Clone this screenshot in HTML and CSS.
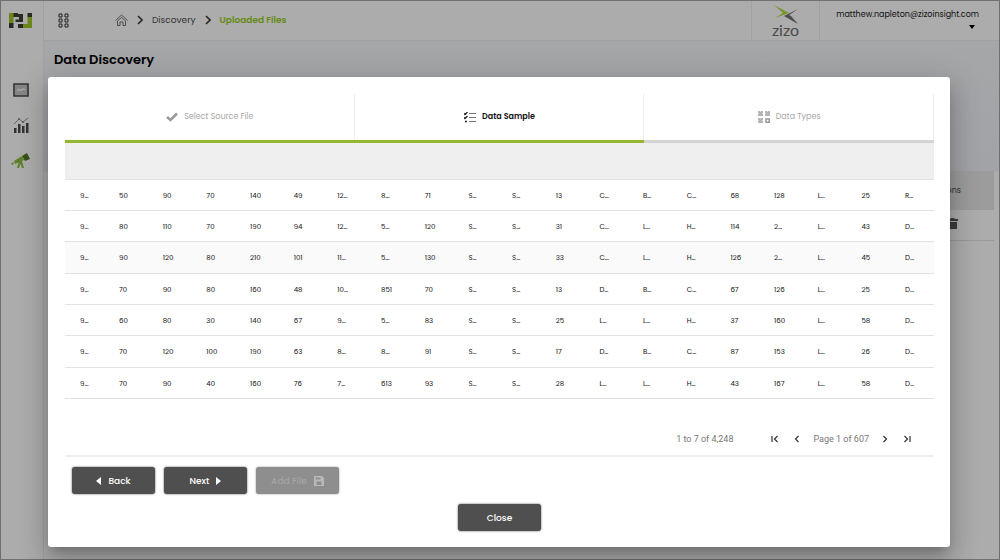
FILE: index.html
```html
<!DOCTYPE html>
<html lang="en">
<head>
<meta charset="utf-8">
<title>Data Discovery</title>
<link rel="stylesheet" href="styles.css">
</head>
<body>
<div class="app">
  <aside class="sidebar">
    <svg class="brand" width="23" height="15" viewBox="0 0 23 15" aria-hidden="true">
      <path fill="#688619" d="M0 0h9v4H4.500v6H0zM18.500 4H23v11h-9v-4h4.500z"/>
      <path fill="#292a22" d="M0 10h4.500v5H0zM4.500 0H9v4H4.500zM9 1h5v8H6.500V6.500H10V4H9zM18.500 0H23v4h-4.500zM9 11h5v4H9z"/>
    </svg>
    <nav class="side-nav" aria-label="Sections">
      <a href="#" aria-label="Dashboard"><svg width="16" height="14" viewBox="0 0 16 14"><path fill="#858585" stroke="#333" stroke-width="1.6" d="M1 1h14v12H1z"/><path fill="none" stroke="#b8b8b8" d="M4 7.500l2-1 2 1 2-1.500 2 .5"/></svg></a>
      <a href="#" aria-label="Analytics"><svg width="16" height="16" viewBox="0 0 16 16"><path fill="#333" d="M1 11h2.500v5H1zM5 7h2.500v9H5zM9 9h2.500v7H9zM13 6h2.500v10H13z"/><path fill="none" stroke="#666" d="M1 7l5-5 4 3 5-4"/><circle cx="6" cy="2" r="1" fill="#555"/><circle cx="10" cy="5" r="1" fill="#555"/></svg></a>
      <a href="#" aria-label="Discovery"><svg width="20" height="16" viewBox="0 0 20 16"><path fill="#385019" d="M11 3l5-3 3 6-5 2z"/><path fill="#5e812d" d="M3 8l8-5 2 4-9 4zM0 11l2-2 1 2-2 1zM8 8h3l2 7h-2L9.500 11 8 15H6z"/></svg></a>
    </nav>
  </aside>
  <div class="main">
    <header class="topbar">
      <button class="apps" aria-label="Apps"><svg width="12" height="15" viewBox="0 0 12 15"><path fill="none" stroke="#222" d="M1 1h3v3H1zM7 1h3v3H7zM1 6h3v3H1zM7 6h3v3H7zM1 11h3v3H1zM7 11h3v3H7z"/></svg></button>
      <nav class="crumbs" aria-label="Breadcrumb">
        <a href="#" aria-label="Home"><svg width="13" height="12" viewBox="0 0 13 12"><path fill="none" stroke="#4e4e4e" stroke-width="1" d="M.5 6.500l6-5.500 6 5.500M2.500 7v4.500h2.500V8h3v3.500h2.500V7L6.500 3.500z"/></svg></a>
        <svg width="6" height="10" viewBox="0 0 6 10"><path fill="none" stroke="#282828" stroke-width="1.600" d="M1 1l4 4-4 4"/></svg>
        <a href="#">Discovery</a>
        <svg width="6" height="10" viewBox="0 0 6 10"><path fill="none" stroke="#282828" stroke-width="1.600" d="M1 1l4 4-4 4"/></svg>
        <a href="#" class="current">Uploaded Files</a>
      </nav>
      <div class="company">
        <svg width="26" height="19" viewBox="0 0 26 19" aria-hidden="true"><path fill="#77952b" d="M1 0l15 8L2 13l8-5z"/><path fill="#4c4c4c" d="M25 4L11 11l14 8-7-8-2-1z"/></svg>
        <span>zizo</span>
      </div>
      <button class="account">matthew.napleton@zizoinsight.com<svg width="6" height="4" viewBox="0 0 6 4"><path d="M0 0h6L3 4z"/></svg></button>
    </header>
    <main class="page">
      <h1>Data Discovery</h1>
      <div class="files">
        <div class="files-head">Actions</div>
        <div class="files-row"><svg width="11" height="11" viewBox="0 0 11 11"><path fill="#3c3c3c" d="M0 1h3l1-1h3l1 1h3v2H0zM1 4h9v7H1z"/></svg></div>
      </div>
    </main>
  </div>
</div>

<div class="overlay">
  <section class="dialog" role="dialog" aria-label="Add file">
    <ol class="steps">
      <li class="done"><svg width="12" height="10" viewBox="0 0 12 10"><path fill="none" stroke="#9b9b9b" stroke-width="2.600" d="M1 5l3.500 3L11 1.500"/></svg>Select Source File</li>
      <li class="active"><svg width="12" height="11" viewBox="0 0 12 11"><path fill="none" stroke="#222" stroke-width="1.300" d="M0 1.500l1 1L3.500 0M0 5.500l1 1L3.500 4M1 9.500h2"/><path stroke="#777" d="M5 1.500h7M5 5.500h7M5 9.500h7"/></svg>Data Sample</li>
      <li><svg width="12" height="12" viewBox="0 0 12 12"><path fill="#b4b4b4" d="M0 0h5v5H0zM7 0h5v5H7zM0 7h5v5H0z"/><path fill="#e4e4e4" d="M2 0h1v1H2zM0 2h1v1H0zM4 2h1v1H4zM9 0h1v1H9zM7 2h1v1H7zM2 7h1v1H2zM0 9h1v1H0zM4 9h1v1H4z"/><path fill="none" stroke="#999" stroke-width="1.500" d="M8 8h3.200v3.200H8z"/></svg>Data Types</li>
    </ol>
    <table class="sample">
      <colgroup><col class="first"><col span="19"></colgroup>
      <thead><tr><th colspan="20" aria-label="Sample columns"></th></tr></thead>
      <tbody>
        <tr><td>9…</td><td>50</td><td>90</td><td>70</td><td>140</td><td>49</td><td>12…</td><td>8…</td><td>71</td><td>S…</td><td>S…</td><td>13</td><td>C…</td><td>B…</td><td>C…</td><td>68</td><td>128</td><td>L…</td><td>25</td><td>R…</td></tr>
        <tr><td>9…</td><td>80</td><td>110</td><td>70</td><td>190</td><td>94</td><td>12…</td><td>5…</td><td>120</td><td>S…</td><td>S…</td><td>31</td><td>C…</td><td>L…</td><td>H…</td><td>114</td><td>2…</td><td>L…</td><td>43</td><td>D…</td></tr>
        <tr class="hovered"><td>9…</td><td>90</td><td>120</td><td>80</td><td>210</td><td>101</td><td>11…</td><td>5…</td><td>130</td><td>S…</td><td>S…</td><td>33</td><td>C…</td><td>L…</td><td>H…</td><td>126</td><td>2…</td><td>L…</td><td>45</td><td>D…</td></tr>
        <tr><td>9…</td><td>70</td><td>90</td><td>80</td><td>160</td><td>48</td><td>10…</td><td>851</td><td>70</td><td>S…</td><td>S…</td><td>13</td><td>D…</td><td>B…</td><td>C…</td><td>67</td><td>126</td><td>L…</td><td>25</td><td>D…</td></tr>
        <tr><td>9…</td><td>60</td><td>80</td><td>30</td><td>140</td><td>67</td><td>9…</td><td>5…</td><td>83</td><td>S…</td><td>S…</td><td>25</td><td>L…</td><td>L…</td><td>H…</td><td>37</td><td>160</td><td>L…</td><td>58</td><td>D…</td></tr>
        <tr><td>9…</td><td>70</td><td>120</td><td>100</td><td>190</td><td>63</td><td>8…</td><td>8…</td><td>91</td><td>S…</td><td>S…</td><td>17</td><td>D…</td><td>B…</td><td>C…</td><td>87</td><td>153</td><td>L…</td><td>26</td><td>D…</td></tr>
        <tr><td>9…</td><td>70</td><td>90</td><td>40</td><td>160</td><td>76</td><td>7…</td><td>613</td><td>93</td><td>S…</td><td>S…</td><td>28</td><td>L…</td><td>L…</td><td>H…</td><td>43</td><td>167</td><td>L…</td><td>58</td><td>D…</td></tr>
      </tbody>
    </table>
    <div class="pager">
      <span class="range">1 to 7 of 4,248</span>
      <button aria-label="First page"><svg width="8" height="8" viewBox="0 0 8 8"><path d="M1 1v6M6.500 1l-3 3 3 3"/></svg></button>
      <button aria-label="Previous page"><svg width="8" height="8" viewBox="0 0 8 8"><path d="M5.500 1l-3 3 3 3"/></svg></button>
      <span class="page-no">Page 1 of 607</span>
      <button aria-label="Next page"><svg width="8" height="8" viewBox="0 0 8 8"><path d="M2.500 1l3 3-3 3"/></svg></button>
      <button aria-label="Last page"><svg width="8" height="8" viewBox="0 0 8 8"><path d="M1.500 1l3 3-3 3M7 1v6"/></svg></button>
    </div>
    <div class="actions">
      <button class="btn"><svg width="5" height="8" viewBox="0 0 5 8"><path fill="#fff" d="M5 0v8L0 4z"/></svg>Back</button>
      <button class="btn">Next<svg width="5" height="8" viewBox="0 0 5 8"><path fill="#fff" d="M0 0v8l5-4z"/></svg></button>
      <button class="btn" disabled>Add File<svg width="10" height="10" viewBox="0 0 10 10"><path fill="#b9b9b9" fill-rule="evenodd" d="M0 0h8l2 2v8H0zM1.500 1.500v2h5v-2zM2.500 5.500V9h5V5.500z"/></svg></button>
    </div>
    <div class="dismiss"><button class="btn">Close</button></div>
  </section>
</div>
</body>
</html>
```
FILE: styles.css
```css
* { box-sizing: border-box; }
body {
  margin: 0;
  font-family: Poppins, Inter, "Open Sans", sans-serif;
  font-size: 9px;
  line-height: 12px;
  color: #111;
}
svg { display: block; flex: none; }
a { color: inherit; text-decoration: none; }
button { font: inherit; color: inherit; background: none; border: 0; padding: 0; }

.app {
  display: flex;
  min-height: 100vh;
  border: 1px solid #707070;
  background: #acacac;
}
.sidebar {
  width: 43px;
  flex: none;
  display: flex;
  flex-direction: column;
  align-items: center;
  padding-top: 12px;
  border-right: 1px solid #a0a0a0;
}
.brand { margin-right: 3px; }
.side-nav {
  display: flex;
  flex-direction: column;
  align-items: center;
  gap: 20px;
  margin: 55px 2px 0 0;
}
.main { flex: 1; display: flex; flex-direction: column; }

.topbar {
  display: flex;
  align-items: stretch;
  height: 40px;
  border-bottom: 1px solid #a0a0a0;
}
.apps { padding: 0 14px; }
.crumbs {
  flex: 1;
  display: flex;
  align-items: center;
  gap: 9px;
  padding: 0 0 2px 31px;
  color: #333;
}
.crumbs .current { color: #668a13; font-weight: 600; }
.company {
  width: 69px;
  display: flex;
  flex-direction: column;
  align-items: center;
  padding-top: 4px;
  border: solid #a0a0a0;
  border-width: 0 1px;
  color: #4b4b4b;
  font: 16px/12px Lato, sans-serif;
}
.account {
  width: 179px;
  display: flex;
  flex-direction: column;
  align-items: flex-end;
  gap: 4px;
  padding: 8px 20px 0 0;
  font-size: 8px;
}
.account svg { margin-right: 4px; }

.page {
  flex: 1;
  background: linear-gradient(#a5a6a8, #a2a3a6 130px, #acacac 131px);
}
h1 { margin: 0; padding: 9px 10px; font-size: 13px; line-height: 20px; font-weight: 600; color: #000; }
.files { margin: 92px 5px 0 9px; }
.files-head, .files-row { display: flex; justify-content: flex-end; align-items: center; }
.files-head { height: 39px; padding-right: 33px; background: #9c9c9c; color: #333; font-size: 8px; }
.files-row { height: 31px; padding: 0 36px 4px 0; border-bottom: 1px solid #999; }

.overlay {
  position: absolute;
  inset: 0;
  padding: 77px 50px 13px 48px;
}
.dialog {
  height: 100%;
  display: flex;
  flex-direction: column;
  padding: 17px 16px 15px 17px;
  background: #fff;
  border-radius: 3px;
  box-shadow: 0 7px 10px -4px rgba(0,0,0,.2), 0 16px 24px 2px rgba(0,0,0,.14), 0 6px 30px 5px rgba(0,0,0,.12);
}
.steps {
  display: grid;
  grid-template-columns: repeat(3, 1fr);
  margin: 0;
  padding: 0;
  list-style: none;
  font-size: 8px;
  color: #a8a8a8;
}
.steps li {
  display: flex;
  align-items: center;
  justify-content: center;
  gap: 6px;
  height: 49px;
  box-shadow: inset -1px 0 #eee;
  border-bottom: 3px solid #d4d4d4;
}
.steps .done, .steps .active { border-bottom-color: #94b632; }
.steps .active { color: #111; font-weight: 600; }

.sample {
  width: 100%;
  height: 256px;
  table-layout: fixed;
  border-collapse: collapse;
  font-size: 7px;
  color: #111;
}
.sample .first { width: 39px; }
.sample th { height: 36px; padding: 0; background: #efefef; }
.sample tr { border-bottom: 1px solid #e3e3e3; }
.sample td { padding: 2px 0 0 15px; white-space: nowrap; }
.sample .hovered { background: #fafafa; }

.pager {
  display: flex;
  align-items: center;
  justify-content: flex-end;
  gap: 14px;
  height: 58px;
  padding: 24px 23px 0 0;
  border-bottom: 2px solid #eee;
  font-family: Roboto, sans-serif;
  font-size: 9px;
  color: #777;
}
.pager .range { margin-right: 24px; }
.pager .page-no { margin: 0 -2px; }
.pager path { fill: none; stroke: #333; stroke-width: 1.2; }

.actions { display: flex; gap: 9px; padding: 10px 7px; }
.btn {
  display: flex;
  align-items: center;
  justify-content: center;
  gap: 7px;
  width: 83px;
  height: 27px;
  border-radius: 3px;
  background: #4f4f4f;
  color: #fff;
  font-weight: 500;
  box-shadow: 0 0 2px #444;
}
.btn:disabled { background: #8e8e8e; color: #a5a5a5; box-shadow: 0 0 2px #888; }
.dismiss { display: flex; justify-content: center; }
```
